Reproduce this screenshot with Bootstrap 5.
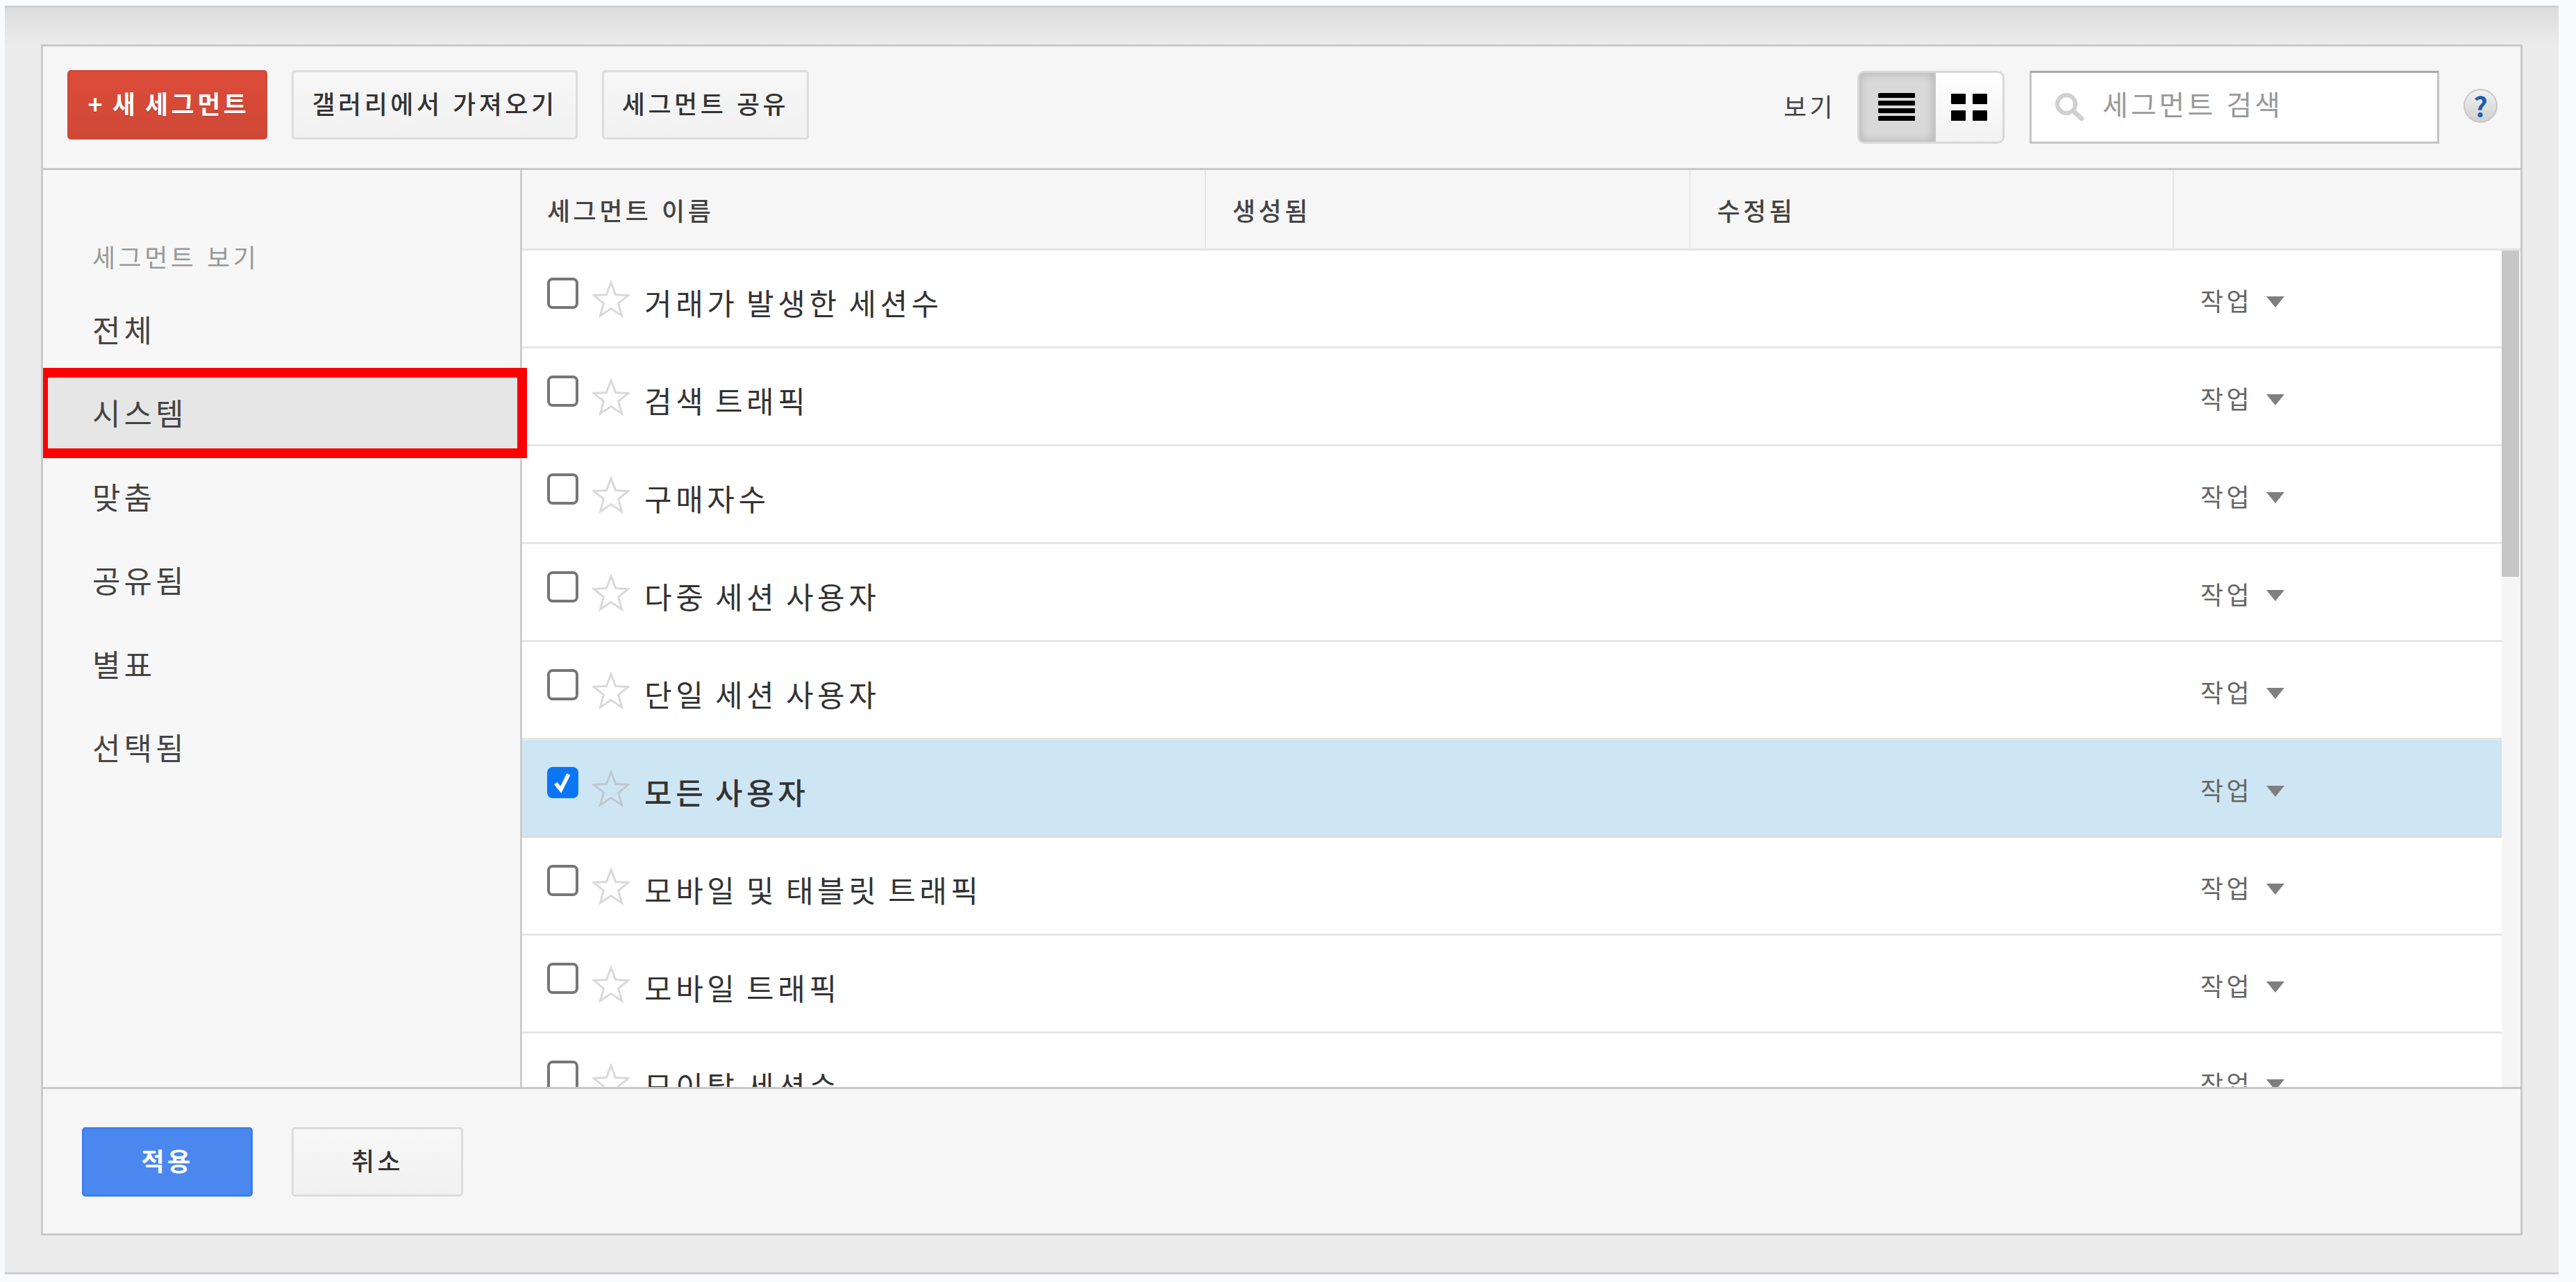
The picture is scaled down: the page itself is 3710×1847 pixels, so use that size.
<!doctype html>
<html lang="ko">
<head>
<meta charset="utf-8">
<title>세그먼트</title>
<link href="https://cdn.jsdelivr.net/npm/bootstrap@5.3.0/dist/css/bootstrap.min.css" rel="stylesheet">
<style>
html,body{height:100%;overflow:hidden}
body{background:#f9fafc;font-family:"Liberation Sans","Noto Sans CJK KR",sans-serif;color:#333;font-size:36px}
.kfont{font-family:"Noto Sans CJK KR","Liberation Sans",sans-serif}
.seg-outer{margin:8px 25px 0 7px;height:1828px;padding:53px 52px 0 52px;background:linear-gradient(#dcdcdc,#ececec 56px);border-top:3px solid #d0d0d0;border-bottom:3px solid #cfcfcf}
.seg-panel{height:1716px;border:3px solid #c9c9c9;background:#f6f6f6}
.seg-toolbar{height:178px;border-bottom:3px solid #c9c9c9;padding:34px 33px 0 35px;flex:none}
.seg-btn{height:100px;padding:0 0 6px;border-radius:5px;font-size:36px;font-weight:500;letter-spacing:4.5px;color:#333;background:linear-gradient(#f7f7f7,#f1f1f1);border:3px solid #dcdcdc;display:flex;align-items:center;justify-content:center}
.seg-btn.w-new{width:288px;margin-right:35px;background:linear-gradient(#dd4b39,#cf4836);border-color:#d14836;color:#fff;font-weight:700;text-shadow:0 1px 1px rgba(0,0,0,.25);word-spacing:-5px;padding-left:4px}
.seg-btn.w-gal{width:412px;margin-right:35px}
.seg-btn.w-share{width:298px}
.seg-btn.w-apply{width:246px;margin-right:56px;background:#4a88f0;border-color:#3f7fe8;color:#fff;font-weight:700}
.seg-btn.w-cancel{width:247px}
.seg-view-lbl{font-size:36px;letter-spacing:4.5px;margin-right:31px;color:#444;padding-bottom:6px}
.seg-right{margin-top:1px}
.seg-toggle{width:212px;height:105px;border:3px solid #d8d8d8;border-radius:10px;overflow:hidden;flex:none}
.seg-toggle-on{width:107px;background:#d9d9d9;box-shadow:inset 0 0 14px #adadad}
.seg-toggle-off{flex:1;background:linear-gradient(#fff,#f2f2f2);border-left:3px solid #c6c6c6}
.seg-search{width:590px;height:105px;margin-left:36px;flex:none}
.seg-search .form-control{height:105px;border-radius:0;border:3px solid #c4c4c4;border-top-color:#a9a9a9;padding:0 0 12px 102px;font-size:40px;letter-spacing:4px;box-shadow:none;font-family:"Noto Sans CJK KR",sans-serif}
.seg-search .form-control::placeholder{color:#999}
.seg-search svg{position:absolute;left:34px;top:30px}
.seg-help{width:49px;height:49px;margin-left:35px;margin-top:-4px;border-radius:50%;border:2px solid #c8c8c8;background:linear-gradient(#f2f2f2,#cfcfcf);color:#1e5fae;font-weight:700;font-size:40px;line-height:44px;text-align:center;flex:none}
.seg-main{flex:1 1 0;min-height:0;overflow:hidden}
.seg-side{width:690px;flex:none;border-right:3px solid #cdcdcd;padding-top:91px;background:#f7f7f7}
.seg-side-title{height:70px;padding-left:71px;font-size:36px;letter-spacing:4.5px;color:#999;line-height:66px;margin-bottom:10px}
.seg-side-item{height:120.4px;padding-left:71px;font-size:44px;letter-spacing:5px;line-height:116px;color:#444}
.seg-side-item.is-sys{background:#e6e6e6;position:relative}
.seg-side-item.is-sys i{position:absolute;left:-7px;right:-10px;top:-6px;bottom:-3px;border:14px solid #f00;pointer-events:none}
.seg-table{flex:1 1 0;min-width:0}
.seg-head{height:116px;flex:none;background:#f6f6f6;border-bottom:3px solid #e3e3e3;font-size:36px;font-weight:500;letter-spacing:4.5px;color:#444}
.seg-head>div{padding:0 0 0 38px;display:flex;align-items:center;border-right:2px solid #e6e6e6}
.seg-head>div:last-child{border-right:0}
.hc1{width:985px;padding-left:36px!important}.hc2{width:698px}.hc3{width:696px}.hc4{flex:1}
.seg-body{flex:1 1 0;min-height:0;overflow:hidden}
.seg-rows{flex:1 1 0;min-width:0;background:#fff}
.seg-row{height:141px;border-bottom:3px solid #e6e6e6;padding-left:36px;flex:none}
.seg-row.is-on{background:#cee6f4;border-bottom-color:#dcdcdc}
.seg-row.is-on .seg-name{font-weight:500}
.seg-row .form-check-input{width:45px;height:45px;margin:39px 0 0;flex:none;border:4px solid #767676;border-radius:8px;background-color:#fff;float:none}
.seg-row .form-check-input:checked{background-color:#0a76f6;border-color:#0a76f6;background-size:100%;background-image:url("data:image/svg+xml,%3csvg xmlns='http://www.w3.org/2000/svg' viewBox='0 0 40 40'%3e%3cpath fill='none' stroke='%23fff' stroke-width='6' d='M9 21l8 10L29 7'/%3e%3c/svg%3e")}
.seg-star{margin:43px 0 0 20px;flex:none}
.seg-name{margin:45px 0 0 21px;width:2241px;font-size:43px;line-height:58px;letter-spacing:5.6px;word-spacing:-6px;color:#333;flex:none;white-space:nowrap}
.seg-act{margin:49px 0 0 0;display:flex;align-items:flex-start;font-size:36px;letter-spacing:4.500px;color:#666;line-height:44px;white-space:nowrap}
.seg-caret{width:0;height:0;border-left:13px solid transparent;border-right:13px solid transparent;border-top:16px solid #7f7f7f;margin:17px 0 0 20px}
.seg-scroll{width:27px;background:#f5f5f5;flex:none}
.seg-thumb{width:25px;height:470px;background:#c6c6c6}
.seg-foot{height:211px;flex:none;border-top:3px solid #c9c9c9;background:#f6f6f6;padding:55px 0 0 56px}
</style>
</head>
<body>
<div class="seg-outer">
<div class="seg-panel d-flex flex-column">

<div class="seg-toolbar d-flex align-items-start kfont">
  <button class="seg-btn w-new" type="button">+ 새 세그먼트</button>
  <button class="seg-btn w-gal" type="button">갤러리에서 가져오기</button>
  <button class="seg-btn w-share" type="button">세그먼트 공유</button>
  <div class="seg-right ms-auto d-flex align-items-center">
    <span class="seg-view-lbl">보기</span>
    <div class="seg-toggle d-flex">
      <div class="seg-toggle-on d-flex align-items-center justify-content-center">
        <svg width="54" height="42" viewBox="0 0 54 42"><g fill="#000"><rect x="0" y="0" width="53" height="7" rx="1"/><rect x="0" y="11" width="53" height="7" rx="1"/><rect x="0" y="22" width="53" height="7" rx="1"/><rect x="0" y="33" width="53" height="7" rx="1"/></g></svg>
      </div>
      <div class="seg-toggle-off d-flex align-items-center justify-content-center">
        <svg width="53" height="40" viewBox="0 0 53 40"><g fill="#000"><rect width="21" height="15" rx="1"/><rect x="31" width="21" height="15" rx="1"/><rect y="24" width="21" height="15" rx="1"/><rect x="31" y="24" width="21" height="15" rx="1"/></g></svg>
      </div>
    </div>
    <div class="seg-search position-relative">
      <input class="form-control" type="text" placeholder="세그먼트 검색">
      <svg width="48" height="46" viewBox="0 0 48 46"><circle cx="19" cy="18" r="13" fill="none" stroke="#d0d0d0" stroke-width="6"/><path d="M29 28l12 11" stroke="#d0d0d0" stroke-width="7" stroke-linecap="round"/></svg>
    </div>
    <div class="seg-help">?</div>
  </div>
</div>

<div class="seg-main d-flex">
  <div class="seg-side kfont">
    <div class="seg-side-title">세그먼트 보기</div>
    <div class="seg-side-item">전체</div>
    <div class="seg-side-item is-sys">시스템<i></i></div>
    <div class="seg-side-item">맞춤</div>
    <div class="seg-side-item">공유됨</div>
    <div class="seg-side-item">별표</div>
    <div class="seg-side-item">선택됨</div>
  </div>
  <div class="seg-table d-flex flex-column kfont">
    <div class="seg-head d-flex">
      <div class="hc1">세그먼트 이름</div>
      <div class="hc2">생성됨</div>
      <div class="hc3">수정됨</div>
      <div class="hc4"></div>
    </div>
    <div class="seg-body d-flex">
      <div class="seg-rows">
        <div class="seg-row d-flex"><input class="form-check-input" type="checkbox"><svg class="seg-star" width="54" height="54" viewBox="0 0 54 54"><path d="M27 3l6.6 17.6 18.4.8-14.4 11.6 4.9 17.9L27 40.6 11.500 50.900l4.900-17.900L2 21.400l18.400-.8z" fill="none" stroke="#d9d9d9" stroke-width="3"/></svg><div class="seg-name">거래가 발생한 세션수</div><div class="seg-act">작업<span class="seg-caret"></span></div></div>
        <div class="seg-row d-flex"><input class="form-check-input" type="checkbox"><svg class="seg-star" width="54" height="54" viewBox="0 0 54 54"><path d="M27 3l6.6 17.6 18.4.8-14.4 11.6 4.9 17.9L27 40.6 11.500 50.900l4.900-17.900L2 21.400l18.400-.8z" fill="none" stroke="#d9d9d9" stroke-width="3"/></svg><div class="seg-name">검색 트래픽</div><div class="seg-act">작업<span class="seg-caret"></span></div></div>
        <div class="seg-row d-flex"><input class="form-check-input" type="checkbox"><svg class="seg-star" width="54" height="54" viewBox="0 0 54 54"><path d="M27 3l6.6 17.6 18.4.8-14.4 11.6 4.9 17.9L27 40.6 11.500 50.900l4.900-17.900L2 21.400l18.400-.8z" fill="none" stroke="#d9d9d9" stroke-width="3"/></svg><div class="seg-name">구매자수</div><div class="seg-act">작업<span class="seg-caret"></span></div></div>
        <div class="seg-row d-flex"><input class="form-check-input" type="checkbox"><svg class="seg-star" width="54" height="54" viewBox="0 0 54 54"><path d="M27 3l6.6 17.6 18.4.8-14.4 11.6 4.9 17.9L27 40.6 11.500 50.900l4.900-17.900L2 21.400l18.400-.8z" fill="none" stroke="#d9d9d9" stroke-width="3"/></svg><div class="seg-name">다중 세션 사용자</div><div class="seg-act">작업<span class="seg-caret"></span></div></div>
        <div class="seg-row d-flex"><input class="form-check-input" type="checkbox"><svg class="seg-star" width="54" height="54" viewBox="0 0 54 54"><path d="M27 3l6.6 17.6 18.4.8-14.4 11.6 4.9 17.9L27 40.6 11.500 50.900l4.900-17.900L2 21.400l18.400-.8z" fill="none" stroke="#d9d9d9" stroke-width="3"/></svg><div class="seg-name">단일 세션 사용자</div><div class="seg-act">작업<span class="seg-caret"></span></div></div>
        <div class="seg-row is-on d-flex"><input class="form-check-input" type="checkbox" checked><svg class="seg-star" width="54" height="54" viewBox="0 0 54 54"><path d="M27 3l6.6 17.6 18.4.8-14.4 11.6 4.9 17.9L27 40.6 11.500 50.900l4.900-17.900L2 21.400l18.400-.8z" fill="none" stroke="#bcc8d0" stroke-width="3"/></svg><div class="seg-name">모든 사용자</div><div class="seg-act">작업<span class="seg-caret"></span></div></div>
        <div class="seg-row d-flex"><input class="form-check-input" type="checkbox"><svg class="seg-star" width="54" height="54" viewBox="0 0 54 54"><path d="M27 3l6.6 17.6 18.4.8-14.4 11.6 4.9 17.9L27 40.6 11.500 50.900l4.900-17.900L2 21.400l18.400-.8z" fill="none" stroke="#d9d9d9" stroke-width="3"/></svg><div class="seg-name">모바일 및 태블릿 트래픽</div><div class="seg-act">작업<span class="seg-caret"></span></div></div>
        <div class="seg-row d-flex"><input class="form-check-input" type="checkbox"><svg class="seg-star" width="54" height="54" viewBox="0 0 54 54"><path d="M27 3l6.6 17.6 18.4.8-14.4 11.6 4.9 17.9L27 40.6 11.500 50.900l4.900-17.900L2 21.400l18.400-.8z" fill="none" stroke="#d9d9d9" stroke-width="3"/></svg><div class="seg-name">모바일 트래픽</div><div class="seg-act">작업<span class="seg-caret"></span></div></div>
        <div class="seg-row d-flex"><input class="form-check-input" type="checkbox"><svg class="seg-star" width="54" height="54" viewBox="0 0 54 54"><path d="M27 3l6.6 17.6 18.4.8-14.4 11.6 4.9 17.9L27 40.6 11.500 50.900l4.900-17.900L2 21.400l18.400-.8z" fill="none" stroke="#d9d9d9" stroke-width="3"/></svg><div class="seg-name">모이탈 세션수</div><div class="seg-act">작업<span class="seg-caret"></span></div></div>
      </div>
      <div class="seg-scroll"><div class="seg-thumb"></div></div>
    </div>
  </div>
</div>

<div class="seg-foot d-flex align-items-start kfont">
  <button class="seg-btn w-apply" type="button">적용</button>
  <button class="seg-btn w-cancel" type="button">취소</button>
</div>

</div>
</div>
<script src="https://cdn.jsdelivr.net/npm/bootstrap@5.3.0/dist/js/bootstrap.bundle.min.js"></script>
</body>
</html>
